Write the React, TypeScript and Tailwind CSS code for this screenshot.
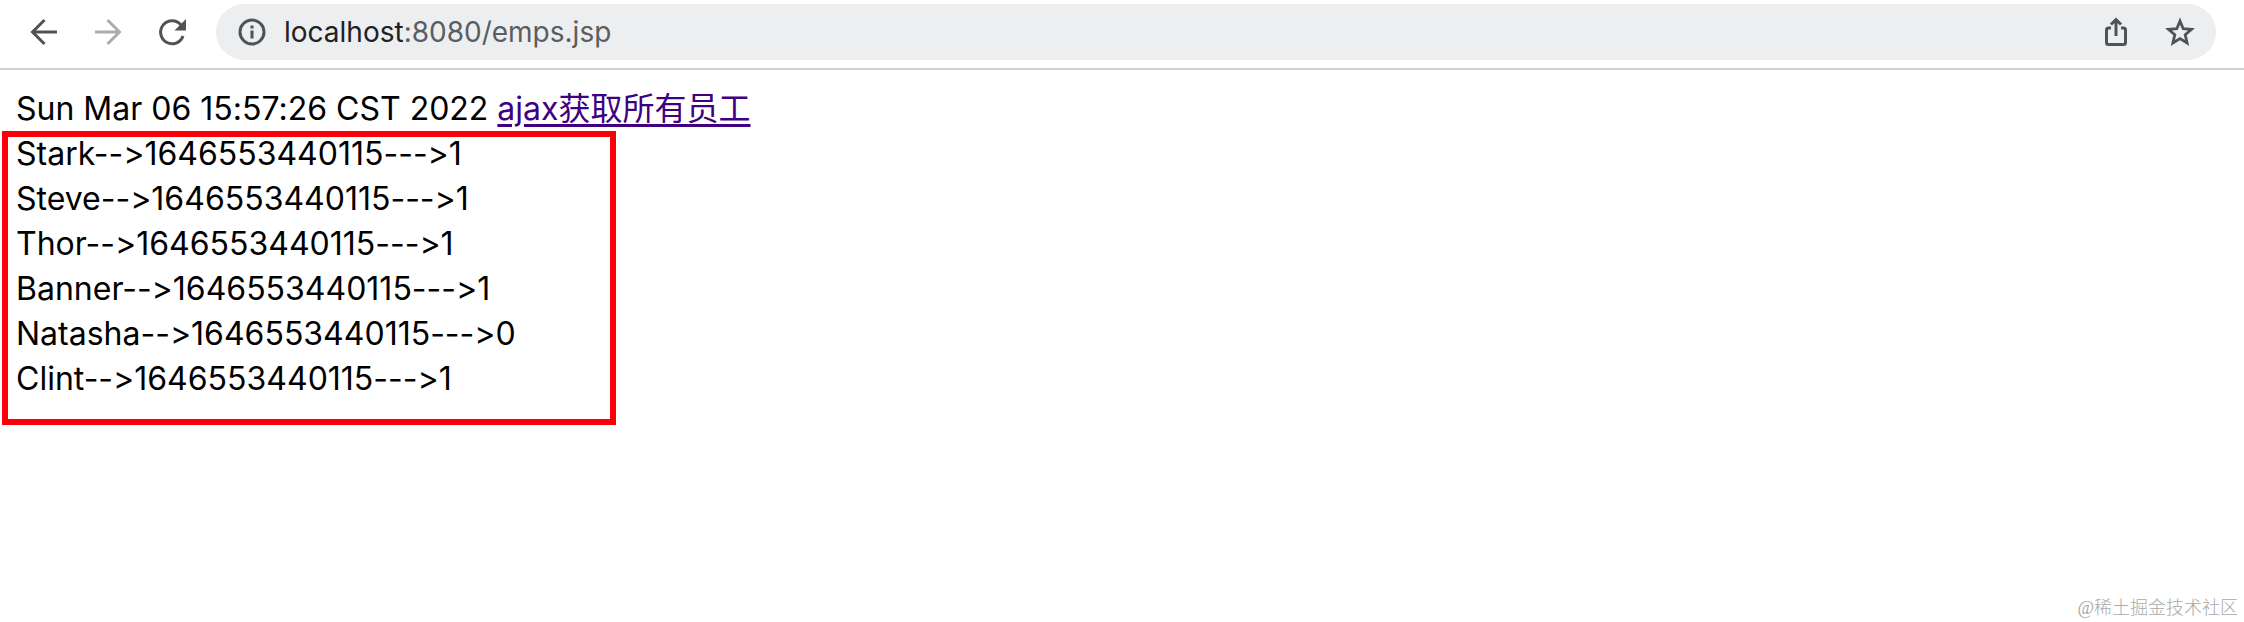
import { ReactNode } from "react";

type Employee = {
  name: string;
  time: string;
  gender: number;
};

const employees: Employee[] = [
  { name: "Stark", time: "1646553440115", gender: 1 },
  { name: "Steve", time: "1646553440115", gender: 1 },
  { name: "Thor", time: "1646553440115", gender: 1 },
  { name: "Banner", time: "1646553440115", gender: 1 },
  { name: "Natasha", time: "1646553440115", gender: 0 },
  { name: "Clint", time: "1646553440115", gender: 1 },
];

const IconButton = ({
  label,
  disabled,
  children,
}: {
  label: string;
  disabled?: boolean;
  children: ReactNode;
}) => (
  <button
    type="button"
    aria-label={label}
    disabled={disabled}
    className="flex size-8 shrink-0 items-center justify-center text-[#4f5256] disabled:text-[#aaacae]"
  >
    <svg
      viewBox="0 0 32 32"
      className="size-8"
      fill="none"
      stroke="currentColor"
      strokeWidth="3"
    >
      {children}
    </svg>
  </button>
);

const Toolbar = () => (
  <header className="flex items-center border-b-2 border-[#d0d1d2] bg-white pt-1 pr-7 pb-2 pl-7">
    <div className="flex gap-8">
      <IconButton label="Back">
        <path d="M29 16H5M16.500 4L4.500 16L16.500 28" />
      </IconButton>
      <IconButton label="Forward" disabled>
        <path d="M3 16H27M15.500 4L27.500 16L15.500 28" />
      </IconButton>
      <IconButton label="Reload">
        <path d="M27 20A11.500 11.500 0 1 1 25 9" />
        <path d="M30 3V14.500H18.500Z" fill="currentColor" stroke="none" />
      </IconButton>
    </div>
    <div className="ml-7 flex h-14 flex-1 items-center rounded-full bg-[#edeef0] pr-5 pl-5">
      <IconButton label="Site information">
        <circle cx="16" cy="16" r="12" />
        <path d="M16 14.500V22.500M16 9.500V12.500" />
      </IconButton>
      <a
        href="#emps"
        className="ml-4 flex-1 font-['Inter','Liberation_Sans',sans-serif] text-[28px] leading-8 text-[#5a5d61]"
      >
        <span className="text-[#202124]">localhost</span>:8080/emps.jsp
      </a>
      <div className="flex gap-8">
        <IconButton label="Share">
          <path d="M11 12H8.500Q6.500 12 6.500 14V26.500Q6.500 28.500 8.500 28.500H23.500Q25.500 28.500 25.500 26.500V14Q25.500 12 23.500 12H21" />
          <path d="M16 20V4.500M11 8.500L16 3.500L21 8.500" />
        </IconButton>
        <IconButton label="Bookmark">
          <path
            d="M16 5L19.200 12.700L27.500 13.400L21.200 18.800L23.100 27L16 22.600L8.900 27L10.800 18.800L4.500 13.400L12.800 12.700Z"
            strokeWidth="2.800"
          />
        </IconButton>
      </div>
    </div>
  </header>
);

export default function App() {
  return (
    <div className="flex min-h-screen flex-col bg-white">
      <Toolbar />
      <main className="flex-1 pt-4 font-['Inter','Noto_Sans_CJK_SC',sans-serif] text-[32px] leading-[45px] text-black [font-feature-settings:'calt'_0]">
        <p className="px-4">
          Sun Mar 06 15:57:26 CST 2022{" "}
          <a
            href="#all"
            className="text-[#40007f] underline decoration-3 underline-offset-4"
          >
            ajax获取所有员工
          </a>
        </p>
        <div className="relative">
          <ul className="px-4 pb-6">
            {employees.map(({ name, time, gender }) => (
              <li key={name}>
                {name}--&gt;{time}---&gt;{gender}
              </li>
            ))}
          </ul>
          {/* highlight frame over the list */}
          <div className="pointer-events-none absolute inset-y-0 left-0.5 w-[614px] border-6 border-[#fb0007]" />
        </div>
      </main>
      <footer className="px-1.5 text-right font-['Liberation_Serif','Noto_Sans_CJK_SC',serif] text-lg font-light text-[#a9a9a9]">
        @稀土掘金技术社区
      </footer>
    </div>
  );
}
